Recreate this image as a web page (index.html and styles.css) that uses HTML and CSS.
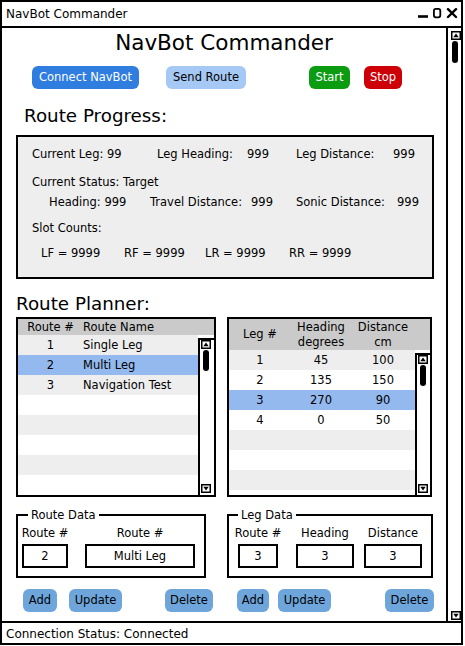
FILE: index.html
```html
<!DOCTYPE html>
<html lang="en">
<head>
<meta charset="utf-8">
<title>NavBot Commander</title>
<link rel="stylesheet" href="styles.css">
</head>
<body>
<div class="window">
  <header class="titlebar">
    <span class="title">NavBot Commander</span>
    <svg class="winctl" width="42" height="12" viewBox="0 0 42 12" aria-hidden="true">
      <rect x="2" y="7.2" width="10" height="2.6" fill="#000"/>
      <rect x="17.9" y="0.9" width="6.4" height="8.4" rx="2" fill="none" stroke="#000" stroke-width="1.8"/>
      <path d="M32 1.2 L40 9 M40 1.2 L32 9" stroke="#000" stroke-width="2.4" stroke-linecap="round"/>
    </svg>
  </header>

  <main class="main">
    <div class="content">
      <h1 class="apptitle">NavBot Commander</h1>

      <div class="toolbar">
        <button class="btn btn-connect">Connect NavBot</button>
        <button class="btn btn-send">Send Route</button>
        <button class="btn btn-start">Start</button>
        <button class="btn btn-stop">Stop</button>
      </div>

      <h2 class="section">Route Progress:</h2>
      <section class="progress">
        <div class="prow prow-leg">
          <span class="pc pc-leg">Current Leg: 99</span><span class="pc pc-lh">Leg Heading:</span><span class="pc pc-lhv">999</span><span class="pc pc-ld">Leg Distance:</span><span class="pc">999</span>
        </div>
        <div class="prow prow-status">
          <span class="pc">Current Status: Target</span>
        </div>
        <div class="prow prow-target">
          <span class="pc pc-head">Heading: 999</span><span class="pc pc-td">Travel Distance:</span><span class="pc pc-tdv">999</span><span class="pc pc-sd">Sonic Distance:</span><span class="pc">999</span>
        </div>
        <div class="prow prow-slots">
          <span class="pc">Slot Counts:</span>
        </div>
        <div class="prow prow-counts">
          <span class="pc pc-lf">LF = 9999</span><span class="pc pc-rf">RF = 9999</span><span class="pc pc-lr">LR = 9999</span><span class="pc">RR = 9999</span>
        </div>
      </section>

      <h2 class="section section-planner">Route Planner:</h2>

      <div class="tables">
        <div class="dtable dtable-routes">
          <div class="thead">
            <span class="c-rnum">Route #</span><span class="c-rname">Route Name</span>
          </div>
          <div class="tbody">
            <div class="rows">
              <div class="tr tr-alt"><span class="c-rnum">1</span><span class="c-rname">Single Leg</span></div>
              <div class="tr tr-sel"><span class="c-rnum">2</span><span class="c-rname">Multi Leg</span></div>
              <div class="tr tr-alt"><span class="c-rnum">3</span><span class="c-rname">Navigation Test</span></div>
              <div class="tr"></div>
              <div class="tr tr-alt"></div>
              <div class="tr"></div>
              <div class="tr tr-alt"></div>
              <div class="tr"></div>
            </div>
            <div class="tscroll">
              <div class="ttrack">
                <svg class="sb-arrow" width="10" height="9" viewBox="0 0 10 9"><rect x="0.75" y="0.75" width="8.5" height="7.5" fill="#fff" stroke="#000" stroke-width="1.5"/><path d="M2.3 6.3H7.7L5 2.6Z" fill="#000"/></svg>
                <div class="tthumb"></div>
                <div class="sb-fill"></div>
                <svg class="sb-arrow" width="10" height="9" viewBox="0 0 10 9"><rect x="0.75" y="0.75" width="8.5" height="7.5" fill="#fff" stroke="#000" stroke-width="1.5"/><path d="M2.3 2.7H7.7L5 6.4Z" fill="#000"/></svg>
              </div>
            </div>
          </div>
        </div>

        <div class="dtable dtable-legs">
          <div class="thead">
            <span class="c-leg">Leg #</span><span class="c-head">Heading<br>degrees</span><span class="c-dist">Distance<br>cm</span>
          </div>
          <div class="tbody">
            <div class="rows">
              <div class="tr tr-alt"><span class="c-leg">1</span><span class="c-head">45</span><span class="c-dist">100</span></div>
              <div class="tr"><span class="c-leg">2</span><span class="c-head">135</span><span class="c-dist">150</span></div>
              <div class="tr tr-sel"><span class="c-leg">3</span><span class="c-head">270</span><span class="c-dist">90</span></div>
              <div class="tr"><span class="c-leg">4</span><span class="c-head">0</span><span class="c-dist">50</span></div>
              <div class="tr tr-alt"></div>
              <div class="tr"></div>
              <div class="tr tr-alt"></div>
              <div class="tr"></div>
            </div>
            <div class="tscroll">
              <div class="ttrack">
                <svg class="sb-arrow" width="10" height="9" viewBox="0 0 10 9"><rect x="0.75" y="0.75" width="8.5" height="7.5" fill="#fff" stroke="#000" stroke-width="1.5"/><path d="M2.3 6.3H7.7L5 2.6Z" fill="#000"/></svg>
                <div class="tthumb"></div>
                <div class="sb-fill"></div>
                <svg class="sb-arrow" width="10" height="9" viewBox="0 0 10 9"><rect x="0.75" y="0.75" width="8.5" height="7.5" fill="#fff" stroke="#000" stroke-width="1.5"/><path d="M2.3 2.7H7.7L5 6.4Z" fill="#000"/></svg>
              </div>
            </div>
          </div>
        </div>
      </div>

      <div class="forms">
        <fieldset class="group group-route">
          <legend>Route Data</legend>
          <div class="field f-rnum"><label>Route #</label><span class="tbox">2</span></div>
          <div class="field f-rname"><label>Route #</label><span class="tbox">Multi Leg</span></div>
        </fieldset>
        <fieldset class="group group-leg">
          <legend>Leg Data</legend>
          <div class="field f-lroute"><label>Route #</label><span class="tbox">3</span></div>
          <div class="field f-lhead"><label>Heading</label><span class="tbox">3</span></div>
          <div class="field f-ldist"><label>Distance</label><span class="tbox">3</span></div>
        </fieldset>
      </div>

      <div class="actions">
        <div class="act-group act-left">
          <button class="btn btn-act btn-add">Add</button>
          <button class="btn btn-act btn-update">Update</button>
          <button class="btn btn-act btn-delete">Delete</button>
        </div>
        <div class="act-group act-right">
          <button class="btn btn-act btn-add">Add</button>
          <button class="btn btn-act btn-update">Update</button>
          <button class="btn btn-act btn-delete">Delete</button>
        </div>
      </div>
    </div>

    <div class="vscroll">
      <svg class="sb-arrow" width="10" height="9" viewBox="0 0 10 9"><rect x="0.75" y="0.75" width="8.5" height="7.5" fill="#fff" stroke="#000" stroke-width="1.5"/><path d="M2.3 6.3H7.7L5 2.6Z" fill="#000"/></svg>
      <div class="sb-thumb"></div>
      <div class="sb-fill"></div>
      <svg class="sb-arrow" width="10" height="9" viewBox="0 0 10 9"><rect x="0.75" y="0.75" width="8.5" height="7.5" fill="#fff" stroke="#000" stroke-width="1.5"/><path d="M2.3 2.7H7.7L5 6.4Z" fill="#000"/></svg>
    </div>
  </main>

  <footer class="statusbar">Connection Status: Connected</footer>
</div>
</body>
</html>
```

FILE: styles.css
```css
* { box-sizing: border-box; }

html, body {
  margin: 0;
  padding: 0;
  background: #fff;
}

body {
  font-family: "DejaVu Sans", "Noto Sans", sans-serif;
  font-size: 11.5px;
  color: #000;
}

.window {
  width: 463px;
  height: 645px;
  border: 2px solid #000;
  display: flex;
  flex-direction: column;
  background: #fff;
}

/* title bar */
.titlebar {
  flex: none;
  height: 26px;
  border-bottom: 2px solid #000;
  display: flex;
  align-items: center;
  padding: 0 3px 0 4px;
}
.title {
  flex: 1;
  font-size: 12px;
  line-height: 16px;
}
.winctl { display: block; }

/* main area */
.main {
  flex: 1;
  min-height: 0;
  display: flex;
}
.content {
  flex: 1;
  min-width: 0;
  display: flex;
  flex-direction: column;
}

.vscroll {
  flex: none;
  width: 15px;
  border-left: 2px solid #000;
  display: flex;
  flex-direction: column;
  padding: 3px 0 1px 3px;
}
.sb-arrow { display: block; flex: none; }
.sb-thumb {
  flex: none;
  width: 6px;
  height: 22px;
  margin: 1px 0 0 1px;
  background: #000;
  border-radius: 3px;
}
.sb-fill { flex: 1; }

.statusbar {
  flex: none;
  height: 22px;
  border-top: 2px solid #000;
  padding: 1px 0 0 4px;
  font-size: 12px;
  line-height: 20px;
}

/* heading + toolbar */
.apptitle {
  margin: 2px 0 0;
  font-size: 21.5px;
  font-weight: normal;
  line-height: 26px;
  text-align: center;
}

.toolbar {
  display: flex;
  margin-top: 10px;
  height: 23px;
}

.btn {
  flex: none;
  border: none;
  margin: 0;
  padding: 0;
  height: 23px;
  border-radius: 6px;
  font-family: inherit;
  font-size: 11.5px;
  line-height: 23px;
  text-align: center;
  color: #000;
}
.btn-connect { margin-left: 30px; width: 107px; background: #2e7ddf; color: #fff; }
.btn-send    { margin-left: 27px; width: 80px;  background: #a6c8f4; }
.btn-start   { margin-left: 63px; width: 41px;  background: #0b9c12; color: #fff; }
.btn-stop    { margin-left: 14px; width: 38px;  background: #cc0006; color: #fff; }

/* sections */
.section {
  margin: 17px 0 0 22px;
  font-size: 18.3px;
  font-weight: normal;
  line-height: 20px;
}
.section-planner { margin: 15px 0 0 14px; }

/* progress panel */
.progress {
  margin: 9px 0 0 14px;
  width: 418px;
  height: 144px;
  border: 2px solid #000;
  background: #eee;
  display: flex;
  flex-direction: column;
}
.prow {
  display: flex;
  height: 16px;
  line-height: 16px;
  white-space: pre;
}
.prow-leg    { margin-top: 9px;  padding-left: 14px; }
.prow-status { margin-top: 12px; padding-left: 14px; }
.prow-target { margin-top: 4px;  padding-left: 31px; }
.prow-slots  { margin-top: 10px; padding-left: 14px; }
.prow-counts { margin-top: 9px;  padding-left: 23px; }

.pc { flex: none; }
.pc-leg { width: 125px; }
.pc-lh  { width: 90px; }
.pc-lhv { width: 49px; }
.pc-ld  { width: 97px; }
.pc-head { width: 101px; }
.pc-td   { width: 101px; }
.pc-tdv  { width: 45px; }
.pc-sd   { width: 101px; }
.pc-lf { width: 83px; }
.pc-rf { width: 81px; }
.pc-lr { width: 84px; }

/* tables */
.tables {
  display: flex;
  margin: 3px 0 0 14px;
}
.dtable {
  flex: none;
  height: 180px;
  border: 2px solid #000;
  display: flex;
  flex-direction: column;
  background: #fff;
}
.dtable-routes { width: 200px; }
.dtable-legs   { width: 205px; margin-left: 11px; }

.thead {
  flex: none;
  display: flex;
  align-items: center;
  background: #cacaca;
}
.dtable-routes .thead { height: 16px; line-height: 16px; }
.dtable-legs .thead   { height: 31px; line-height: 15px; }

.tbody {
  flex: 1;
  min-height: 0;
  display: flex;
}
.rows {
  flex: 1;
  min-width: 0;
  overflow: hidden;
}
.tr {
  display: flex;
  height: 20px;
  line-height: 20px;
}
.tr-alt { background: #eee; }
.tr-sel { background: #94b9ee; }

.c-rnum { flex: none; width: 65px; text-align: center; }
.c-rname { flex: 1; white-space: nowrap; }
.c-leg  { flex: none; width: 62px; text-align: center; }
.c-head { flex: none; width: 60px; text-align: center; }
.c-dist { flex: none; width: 64px; text-align: center; }

.tscroll {
  flex: none;
  width: 16px;
  padding-top: 3px;
  display: flex;
  background: #fff;
}
.dtable-legs .tscroll { width: 15px; }
.ttrack {
  flex: 1;
  border-left: 2px solid #000;
  border-top: 2px solid #000;
  display: flex;
  flex-direction: column;
  padding: 0 0 2px 1px;
}
.tthumb {
  flex: none;
  width: 6px;
  height: 21px;
  margin: 1px 0 0 2px;
  background: #000;
  border-radius: 3px;
}

/* field groups */
.forms {
  display: flex;
  margin: 11px 0 0 14px;
}
.group {
  margin: 0;
  min-width: 0;
  height: 70px;
  border: 2px solid #000;
  padding: 4px 0 8px 4px;
  display: flex;
  align-items: flex-start;
}
.group-route { width: 190px; }
.group-leg   { width: 206px; margin-left: 21px; padding-left: 9px; }
.group legend {
  font-size: 11.5px;
  line-height: 14px;
  padding: 0 3px;
  margin-left: 6px;
}
.group-leg legend { margin-left: 0; }

.field {
  flex: none;
  display: flex;
  flex-direction: column;
  align-items: center;
}
.field label {
  line-height: 14px;
  white-space: nowrap;
}
.tbox {
  display: block;
  margin-top: 4px;
  width: 100%;
  height: 24px;
  border: 2px solid #000;
  background: #fff;
  text-align: center;
  line-height: 20px;
}
.f-rnum   { width: 46px; }
.f-rname  { width: 110px; margin-left: 17px; }
.f-lroute { width: 40px; }
.f-lhead  { width: 58px; margin-left: 18px; }
.f-ldist  { width: 58px; margin-left: 10px; }

/* action buttons */
.actions {
  display: flex;
  margin: 11px 0 0 21px;
}
.act-group { flex: none; display: flex; }
.act-left  { width: 190px; }
.act-right { width: 197px; margin-left: 24px; }

.btn-act { background: #6ea6dc; }
.btn-add { width: 34px; }
.btn-update { width: 53px; margin-left: 12px; }
.btn-delete { width: 48px; margin-left: auto; }
.act-right .btn-add { width: 32px; }
.act-right .btn-update { margin-left: 9px; }
.act-right .btn-delete { width: 49px; }
```
